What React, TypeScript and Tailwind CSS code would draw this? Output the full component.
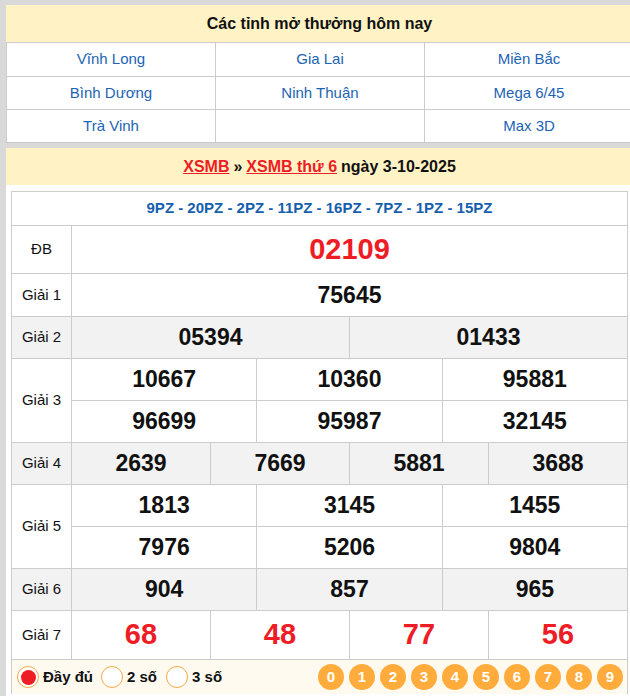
import React from "react";

const F = { fontFamily: '"Liberation Sans", Arial, sans-serif' };

function Cell({ children, first, cls }: { children?: React.ReactNode; first?: boolean; cls?: string }) {
  return (
    <div className={`flex-1 flex items-center justify-center ${first ? "" : "border-l border-[#cccccc]"} ${cls || ""}`}>
      {children}
    </div>
  );
}

function PrizeRow({
  label,
  rows,
  h,
  gray,
  numCls,
}: {
  label: string;
  rows: string[][];
  h: number[];
  gray?: boolean;
  numCls: string;
}) {
  return (
    <div className={`flex border-t border-[#cccccc] ${gray ? "bg-[#f2f2f2]" : "bg-white"}`}>
      <div className="w-[60px] shrink-0 flex items-center justify-center border-r border-[#cccccc] text-[15px] text-[#111]">
        {label}
      </div>
      <div className="flex-1 flex flex-col">
        {rows.map((r, i) => (
          <div
            key={i}
            className={`flex ${i > 0 ? "border-t border-[#cccccc]" : ""}`}
            style={{ height: h[i] }}
          >
            {r.map((n, j) => (
              <Cell key={j} first={j === 0} cls={numCls}>
                {n}
              </Cell>
            ))}
          </div>
        ))}
      </div>
    </div>
  );
}

export default function App() {
  const blackNum = "text-[23px] font-bold text-[#111]";
  const redNum = "text-[29px] font-bold text-[#ee1c25]";
  return (
    <div className="w-[630px] h-[696px] overflow-hidden bg-[#d9d9d9] pl-[6px] pt-[5px]" style={F}>
      <div className="w-[627px]">
        {/* Panel 1 */}
        <div className="bg-white border-b border-[#c8c8c8]">
          <div className="h-[38px] bg-[#fff3c5] flex items-center justify-center text-[16px] font-bold text-[#111] border-b border-[#cccccc]">
            Các tỉnh mở thưởng hôm nay
          </div>
          <div className="grid grid-cols-3 text-[15px] text-[#1c64b4]">
            {[
              ["Vĩnh Long", "Gia Lai", "Miền Bắc"],
              ["Bình Dương", "Ninh Thuận", "Mega 6/45"],
              ["Trà Vinh", "", "Max 3D"],
            ].map((r, i) => (
              <React.Fragment key={i}>
                {r.map((t, j) => (
                  <div
                    key={j}
                    className={`h-[33px] flex items-center justify-center border-l border-[#cccccc] ${i > 0 ? "border-t" : ""}`}
                  >
                    {t}
                  </div>
                ))}
              </React.Fragment>
            ))}
          </div>
        </div>

        {/* Panel 2 */}
        <div className="mt-[5px] bg-white">
          <div className="h-[37px] bg-[#fff3c5] flex items-center justify-center text-[16px] font-bold text-[#111]">
            <a className="text-[#ee1c25] underline">XSMB</a>
            <span className="mx-[4px]">»</span>
            <a className="text-[#ee1c25] underline">XSMB thứ 6</a>
            <span className="ml-[4px]">ngày 3-10-2025</span>
          </div>
          <div className="p-[5px] pt-[6px]">
            <div className="border border-[#cccccc] border-b-0">
              <div className="h-[33px] flex items-center justify-center text-[15px] font-bold text-[#1560ad]">
                9PZ - 20PZ - 2PZ - 11PZ - 16PZ - 7PZ - 1PZ - 15PZ
              </div>
              <PrizeRow label="ĐB" rows={[["02109"]]} h={[47]} numCls={redNum} />
              <PrizeRow label="Giải 1" rows={[["75645"]]} h={[42]} numCls={blackNum} />
              <PrizeRow label="Giải 2" rows={[["05394", "01433"]]} h={[41]} gray numCls={blackNum} />
              <PrizeRow
                label="Giải 3"
                rows={[
                  ["10667", "10360", "95881"],
                  ["96699", "95987", "32145"],
                ]}
                h={[41, 42]}
                numCls={blackNum}
              />
              <PrizeRow label="Giải 4" rows={[["2639", "7669", "5881", "3688"]]} h={[41]} gray numCls={blackNum} />
              <PrizeRow
                label="Giải 5"
                rows={[
                  ["1813", "3145", "1455"],
                  ["7976", "5206", "9804"],
                ]}
                h={[41, 42]}
                numCls={blackNum}
              />
              <PrizeRow label="Giải 6" rows={[["904", "857", "965"]]} h={[41]} gray numCls={blackNum} />
              <PrizeRow label="Giải 7" rows={[["68", "48", "77", "56"]]} h={[48]} numCls={redNum} />
              <div className="h-[35px] border-t border-[#cccccc] bg-[#fffaf0] flex items-center pl-[5px] pr-[4px]">
                <div className="flex items-center">
                  <span className="w-[22px] h-[22px] rounded-full border border-[#f5a842] bg-white flex items-center justify-center">
                    <span className="w-[15px] h-[15px] rounded-full bg-[#ee1c25]" />
                  </span>
                  <span className="ml-[4px] text-[15px] font-bold text-[#111]">Đầy đủ</span>
                  <span className="ml-[8px] w-[22px] h-[22px] rounded-full border border-[#f5a842] bg-white" />
                  <span className="ml-[4px] text-[15px] font-bold text-[#111]">2 số</span>
                  <span className="ml-[9px] w-[22px] h-[22px] rounded-full border border-[#f5a842] bg-white" />
                  <span className="ml-[4px] text-[15px] font-bold text-[#111]">3 số</span>
                </div>
                <div className="ml-auto flex gap-[5px]">
                  {["0", "1", "2", "3", "4", "5", "6", "7", "8", "9"].map((d) => (
                    <span
                      key={d}
                      className="w-[26px] h-[26px] rounded-full bg-[#ffac3c] text-white text-[15px] font-bold flex items-center justify-center"
                    >
                      {d}
                    </span>
                  ))}
                </div>
              </div>
            </div>
          </div>
        </div>
      </div>
    </div>
  );
}
